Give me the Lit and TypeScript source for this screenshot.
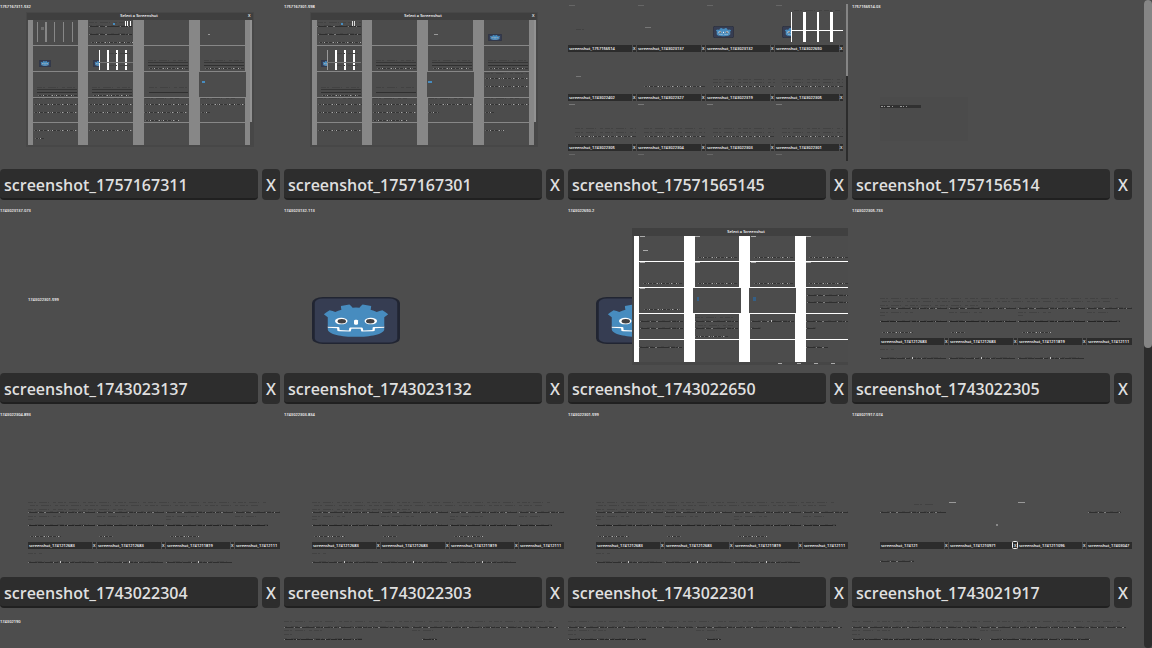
import { LitElement, html, svg, css, nothing } from "lit";
import { customElement } from "lit/decorators.js";

const line = (x: number, y: number, w: number, stroke: string, dash = "none") => svg`
  <path d="M${x} ${y + 0.5}h${w}" fill="none" stroke=${stroke} stroke-width="1" stroke-dasharray=${dash}/>`;

const strip = (x: number, y: number, w: number, bright = "1 9 1 5 2 13 1 7", tone = "#2f2f2f") => svg`
  ${line(x, y, w, "#424242")}
  ${line(x, y, w, tone, "9 1 6 1 13 2 4 1")}
  ${line(x, y - 1, w, "#444", "3 4 7 2 1 5")}
  ${line(x, y, w, "#7d7d7d", bright)}`;

const faint = (x: number, y: number, w: number) => line(x, y, w, "#424242", "5 1 2 3 8 1 1 4 3 2");

const dots = (x: number, y: number, w: number) => svg`
  ${line(x, y, w, "#363636")}
  ${line(x, y, w, "#a8a8a8", "1 4 1 7 2 3 1 9")}
  ${line(x, y, w, "#6a6a6a", "1 2 1 5 1 3")}`;

const label = (x: number, y: number, t: string, cls = "tiny") =>
  svg`<text class=${cls} x=${x} y=${y}>${t}</text>`;

const rect = (x: number, y: number, w: number, h: number, fill: string) =>
  svg`<rect x=${x} y=${y} width=${w} height=${h} fill=${fill}/>`;

const robot = (x: number, y: number, w: number, h: number) => svg`
  <svg x=${x} y=${y} width=${w} height=${h} viewBox="0 0 128 128" preserveAspectRatio="none">
    <rect x="2" y="2" width="124" height="124" rx="14" fill="#363d52" stroke="#212532" stroke-width="4"/>
    <g transform="scale(.101) translate(122 122)">
      <g fill="#fff">
        <path d="M105 673v33q407 354 814 0v-33z"/>
        <path fill="#478cbf" d="m105 673 152 14q12 1 15 14l4 67 132 10 8-61q2-11 15-15h162q13 4 15 15l8 61 132-10 4-67q3-13 15-14l152-14V427q30-39 56-81-35-59-83-108-43 20-82 47-40-37-88-64 7-51 8-102-59-28-123-42-26 43-46 89-49-7-98 0-20-46-46-89-64 14-123 42 1 51 8 102-48 27-88 64-39-27-82-47-48 49-83 108 26 42 56 81zm0 33v39c0 276 813 276 814 0v-39l-134 12-5 69q-2 10-14 13l-162 11q-12 0-16-11l-10-65H446l-10 65q-4 11-16 11l-162-11q-12-3-14-13l-5-69z"/>
        <path d="M483 600c0 34 58 34 58 0v-86c0-34-58-34-58 0z"/>
        <circle cx="725" cy="526" r="90"/><circle cx="299" cy="526" r="90"/>
      </g>
      <g fill="#414042"><circle cx="307" cy="532" r="60"/><circle cx="717" cy="532" r="60"/></g>
    </g>
  </svg>`;

const nameBar = (x: number, y: number, t: string) => svg`
  ${rect(x, y, 64, 7, "#2c2c2c")}
  ${label(x + 1, y + 5, t)}
  ${x + 69 <= 280 ? svg`${rect(x + 65, y, 3, 7, "#2c2c2c")}${label(x + 65, y + 5, "X")}` : nothing}`;

const shade = "#4c4c4c";
const grey = "#878787";
const cols = [33, 88, 144, 200];
const lightBars = (x: number, y: number, first: string) => svg`
  ${rect(x, y, 1, 20, first)}${rect(x + 8, y, 2, 20, "#fff")}
  ${rect(x + 17, y, 2, 20, "#fff")}${rect(x + 26, y, 2, 20, "#fff")}
  ${rect(x, y + 12, 34, 1, "#777")}${faint(x + 10, y + 3, 24)}${faint(x + 10, y + 15, 24)}`;
const threeStrips = (x: number, y: number) =>
  svg`${faint(x + 4, y - 2, 40)}${line(x + 4, y, 40, "#363636")}${line(x + 4, y + 3, 40, "#303030")}${dots(x + 5, y + 6, 39)}`;

const dialog = (cells: unknown) => svg`
  ${rect(26, 12, 228, 135, "#474747")}
  ${rect(27, 13, 226, 7, "#3f3f3f")}
  ${label(139, 17, "Select a Screenshot", "tiny mid")}
  ${label(248, 17, "X")}
  ${rect(28, 20, 217, 125, shade)}
  ${[45, 71, 97, 122].map((y) => rect(28, y, 218, 1, grey))}
  ${rect(28, 20, 5, 125, grey)}${rect(78, 20, 10, 125, grey)}
  ${rect(133, 20, 11, 125, grey)}${rect(189, 20, 11, 125, grey)}
  ${rect(245, 20, 5, 125, grey)}${rect(250, 20, 2, 102, "#929292")}
  ${cells}`;

const dialogOne = svg`${label(0, 8, "1757167311.532")}${dialog(svg`
  ${[37, 45, 54, 63, 72].map((x, i) => rect(x, 22, i === 1 ? 2 : 1, 20, grey))}
  ${rect(41, 27, 3, 3, "#6c6c6c")}
  ${faint(89, 22, 43)}${strip(89, 26, 43)}${strip(89, 34, 43)}${dots(91, 42, 42)}
  ${rect(113, 23, 2, 2, "#478cbf")}${[125, 127, 130].map((x) => rect(x, 21, 1, 5, "#fff"))}
  ${rect(208, 34, 2, 1, "#999")}
  ${robot(39, 60, 12, 7)}${robot(93, 60, 12, 7)}${rect(99, 50, 34, 20, shade)}${lightBars(99, 50, "#fff")}
  ${threeStrips(144, 62)}${threeStrips(200, 62)}
  ${threeStrips(33, 89)}${threeStrips(88, 89)}${line(149, 92, 39, "#303030")}${faint(149, 87, 38)}
  ${rect(199, 72, 47, 25, shade)}${rect(202, 81, 3, 2, "#478cbf")}
  ${cols.map((x) => svg`${faint(x + 1, 98, 34)}${dots(x + 1, 104, 44)}`)}
  ${dots(34, 112, 43)}${dots(89, 112, 43)}${dots(144, 112, 43)}${dots(201, 112, 9)}${dots(145, 120, 34)}
  ${dots(34, 130, 43)}${dots(89, 130, 43)}${dots(35, 138, 9)}`)}`;

const dialogTwo = svg`${label(0, 8, "1757167301.598")}${dialog(svg`
  ${faint(34, 22, 43)}${strip(33, 26, 44)}${strip(34, 34, 43)}${dots(35, 42, 42)}
  ${rect(57, 23, 2, 2, "#478cbf")}${[68, 70].map((x) => rect(x, 21, 1, 5, "#ddd"))}
  ${rect(150, 34, 4, 1, "#999")}${robot(204, 34, 14, 7)}
  ${robot(37, 60, 12, 7)}${rect(43, 50, 34, 20, shade)}${lightBars(43, 50, "#999")}
  ${threeStrips(88, 62)}${threeStrips(144, 62)}${threeStrips(200, 62)}
  ${threeStrips(33, 89)}${line(92, 92, 40, "#303030")}${faint(92, 87, 38)}
  ${rect(143, 72, 47, 25, shade)}${rect(144, 81, 4, 2, "#478cbf")}
  ${faint(201, 73, 43)}${dots(201, 78, 43)}${dots(201, 86, 43)}
  ${cols.map((x) => svg`${faint(x + 1, 98, 34)}${dots(x + 1, 104, 44)}`)}
  ${dots(34, 112, 43)}${dots(89, 112, 43)}${dots(144, 112, 11)}${dots(201, 112, 9)}${dots(89, 120, 34)}
  ${dots(34, 130, 43)}${dots(201, 130, 19)}`)}`;

const gallery = svg`
  ${[0, 69, 138, 207].map((x) => svg`${rect(x + 1, 5, 6, 1, "#666")}${rect(x + 1, 104, 6, 1, "#777")}${rect(x + 1, 154, 6, 1, "#666")}`)}
  ${faint(8, 29, 8)}${rect(77, 27, 6, 1, "#777")}${rect(8, 76, 5, 1, "#777")}
  ${robot(145, 26, 21, 12)}${robot(214, 26, 21, 12)}${rect(223, 11, 53, 31, shade)}
  ${faint(226, 10, 46)}
  ${rect(223, 12, 1, 30, "#fff")}${rect(235, 12, 3, 30, "#fff")}${rect(249, 12, 2, 30, "#fff")}${rect(262, 12, 3, 30, "#fff")}${rect(223, 30, 52, 1, "#fff")}
  ${["1757156514", "1743023137", "1743023132", "1743022650"].map((n, i) => nameBar(i * 69, 45, "screenshot_" + n))}
  ${["1743022402", "1743022327", "1743022319", "1743022305"].map((n, i) => nameBar(i * 69, 94, "screenshot_" + n))}
  ${["1743022305", "1743022304", "1743022303", "1743022301"].map((n, i) => nameBar(i * 69, 144, "screenshot_" + n))}
  ${[45, 94, 144].map((y) => svg`${rect(272, y, 3, 7, "#2c2c2c")}${label(272, y + 5, "X")}`)}
  ${dots(76, 86, 61)}${dots(145, 86, 62)}${dots(214, 86, 61)}${faint(145, 79, 62)}${faint(145, 82, 62)}${faint(214, 79, 61)}${faint(214, 82, 61)}
  ${[7, 76, 145, 214].map((x) => svg`${faint(x, 128, 61)}${faint(x, 132, 61)}${dots(x, 136, 61)}`)}
  ${rect(278, 4, 2, 72, "#858585")}${rect(278, 76, 2, 85, "#2c2c2c")}`;

const blank = svg`${label(0, 8, "1757156514.03")}
  ${rect(28, 97, 88, 44, "#4b4b4b")}${rect(28, 105, 41, 3, "#313131")}${line(29, 106, 26, "#999", "2 1 1 2 3 2 1 7")}`;

const lone = svg`${label(0, 8, "1743023137.073")}${label(28, 97, "1743022301.599")}`;
const robotShot = svg`${label(0, 8, "1743023132.113")}${robot(28, 93, 88, 47)}`;

const whiteX = [[66, 5], [116, 11], [171, 11], [227, 11]];
const overlap = svg`${label(0, 8, "1743022650.2")}${robot(28, 93, 88, 47)}
  ${rect(64, 24, 216, 137, "#464646")}${rect(64, 24, 216, 8, "#404040")}
  ${label(178, 29, "Select a Screenshot", "tiny mid")}
  ${rect(66, 32, 214, 126, shade)}
  ${[57, 83, 109, 135].map((y) => rect(66, y, 214, 1, "#fff"))}
  ${whiteX.map(([x, w]) => rect(x, 32, w, 126, "#fff"))}
  ${rect(125, 84, 48, 25, shade)}${rect(181, 84, 47, 25, shade)}
  ${rect(129, 93, 2, 4, "#345f86")}${rect(185, 93, 3, 4, "#345f86")}
  ${[127, 183, 238].map((x) => svg`${dots(x + 3, 53, 39)}${rect(x, 32, 5, 1, "#aaa")}${rect(x, 58, 5, 1, "#aaa")}`)}
  ${[72, 127, 183, 238].map((x) => dots(x + 3, 79, 39))}
  ${rect(75, 46, 5, 1, "#aaa")}${rect(72, 32, 5, 1, "#aaa")}${rect(72, 58, 5, 1, "#aaa")}${rect(72, 84, 5, 1, "#aaa")}
  ${dots(76, 105, 36)}${faint(239, 84, 40)}${strip(239, 91, 41)}${strip(239, 98, 41)}
  ${strip(72, 117, 43)}${strip(127, 117, 43)}${strip(183, 117, 43)}${strip(238, 117, 42)}${rect(203, 116, 1, 2, "#bbb")}
  ${faint(127, 113, 40)}${faint(130, 121, 36)}${strip(72, 124, 43)}${strip(127, 124, 43)}${strip(183, 124, 10)}${strip(238, 124, 10)}
  ${dots(127, 132, 33)}${strip(71, 143, 43)}${strip(238, 143, 22)}
  ${[210, 229, 246, 263].map((x) => rect(x, 159, 4, 1, "#aaa"))}`;

const listing = (stamp: string) => svg`${label(0, 8, stamp)}
  ${faint(28, 94, 240)}${faint(30, 97, 228)}${faint(28, 101, 100)}
  ${[28, 97, 166].map(
    (x) => svg`${strip(x, 104, 67)}${faint(x, 108, 33)}${strip(x, 117, 67, "1 15 1 22", "#242424")}
      ${strip(x, 154, 66, "1 24 1 15")}${rect(x + 32, 153, 1, 2, "#c4c4c4")}`,
  )}
  ${strip(235, 104, 45)}${faint(235, 108, 24)}${faint(28, 111, 5)}${faint(166, 111, 5)}
  ${strip(235, 117, 33, "1 15 1 22", "#242424")}
  ${dots(30, 128, 31)}${dots(99, 128, 14)}${dots(170, 128, 29)}
  ${nameBar(28, 134, "screenshot_1741212683")}${nameBar(97, 134, "screenshot_1741212683")}${nameBar(166, 134, "screenshot_1741211819")}${nameBar(235, 134, "screenshot_17412111")}
  ${faint(28, 145, 14)}`;

const sparse = svg`${label(0, 8, "1743021917.074")}
  ${rect(97, 94, 7, 1, "#999")}${rect(166, 94, 7, 1, "#999")}${faint(62, 96, 20)}
  ${strip(28, 104, 66)}${strip(236, 104, 33)}${rect(144, 116, 2, 2, "#888")}
  ${nameBar(28, 134, "screenshot_174121")}${nameBar(97, 134, "screenshot_1741210971")}${nameBar(166, 134, "screenshot_1741211096")}${nameBar(235, 134, "screenshot_17403047")}
  <rect x="160.5" y="133.5" width="5" height="7" rx="1" fill="#2e2e2e" stroke="#eee"/>${label(162, 139, "X")}
  ${strip(28, 153, 34)}`;

const tailStamp = svg`${label(0, 11, "174302190", "tiny")}`;
const tail = (second: number) => svg`
  ${faint(0, 9, 270)}${strip(0, 15, 125)}${strip(128, 15, 124)}${strip(254, 15, 20)}
  ${faint(0, 18, 38)}${faint(128, 18, 24)}${faint(0, 22, 8)}
  ${strip(0, 27, second, "1 11 1 16", "#282828")}${strip(138, 27, second > 100 ? 100 : 15, "1 11 1 16", "#282828")}`;

interface Shot { name?: string; art: unknown }

const shots: Shot[] = [
  { name: "screenshot_1757167311", art: dialogOne },
  { name: "screenshot_1757167301", art: dialogTwo },
  { name: "screenshot_17571565145", art: gallery },
  { name: "screenshot_1757156514", art: blank },
  { name: "screenshot_1743023137", art: lone },
  { name: "screenshot_1743023132", art: robotShot },
  { name: "screenshot_1743022650", art: overlap },
  { name: "screenshot_1743022305", art: listing("1743022305.733") },
  { name: "screenshot_1743022304", art: listing("1743022304.893") },
  { name: "screenshot_1743022303", art: listing("1743022303.834") },
  { name: "screenshot_1743022301", art: listing("1743022301.599") },
  { name: "screenshot_1743021917", art: sparse },
  { art: tailStamp },
  { art: tail(78) },
  { art: tail(78) },
  { art: tail(130) },
];

@customElement("app-root")
export class AppRoot extends LitElement {
  static styles = css`
    :host {
      display: flex;
      height: 100vh;
      gap: 12px;
      background: #4d4d4d;
      color: #dfdfdf;
      font-family: "Open Sans", "Noto Sans", sans-serif;
      font-size: 16px;
      font-weight: 600;
    }
    .list {
      flex: 1;
      min-width: 0;
      display: grid;
      grid-template-columns: repeat(4, minmax(0, 1fr));
      align-content: start;
      gap: 4px;
      overflow-y: auto;
      scrollbar-width: none;
    }
    .card {
      display: flex;
      flex-direction: column;
      gap: 4px;
    }
    .art {
      display: block;
      width: 100%;
      height: auto;
    }
    .tiny {
      font-size: 4px;
      fill: #fff;
    }
    .mid {
      text-anchor: middle;
    }
    .row {
      display: flex;
      gap: 4px;
    }
    .name,
    .remove {
      box-sizing: border-box;
      height: 31px;
      margin: 0;
      padding: 0 4px;
      border: 0;
      border-radius: 4px;
      background: #2d2d2d;
      color: inherit;
      font: inherit;
    }
    .name {
      flex: 1;
      min-width: 0;
      border-bottom: 2px solid #202020;
      padding-top: 2px;
    }
    .remove {
      width: 18px;
    }
    .track {
      width: 8px;
      border-radius: 4px;
      background: #2d2d2d;
    }
    .thumb {
      height: 53.7%;
      border-radius: 4px;
      background: #858585;
    }
  `;

  render() {
    return html`
      <div class="list">
        ${shots.map(
          (s) => html`<div class="card">
            <svg class="art" viewBox="0 0 280 165" aria-hidden="true">${s.art}</svg>
            ${s.name
              ? html`<div class="row">
                  <input class="name" type="text" aria-label="Screenshot name" .value=${s.name} />
                  <button class="remove" type="button" aria-label="Delete ${s.name}">X</button>
                </div>`
              : nothing}
          </div>`,
        )}
      </div>
      <div class="track"><div class="thumb"></div></div>
    `;
  }
}
